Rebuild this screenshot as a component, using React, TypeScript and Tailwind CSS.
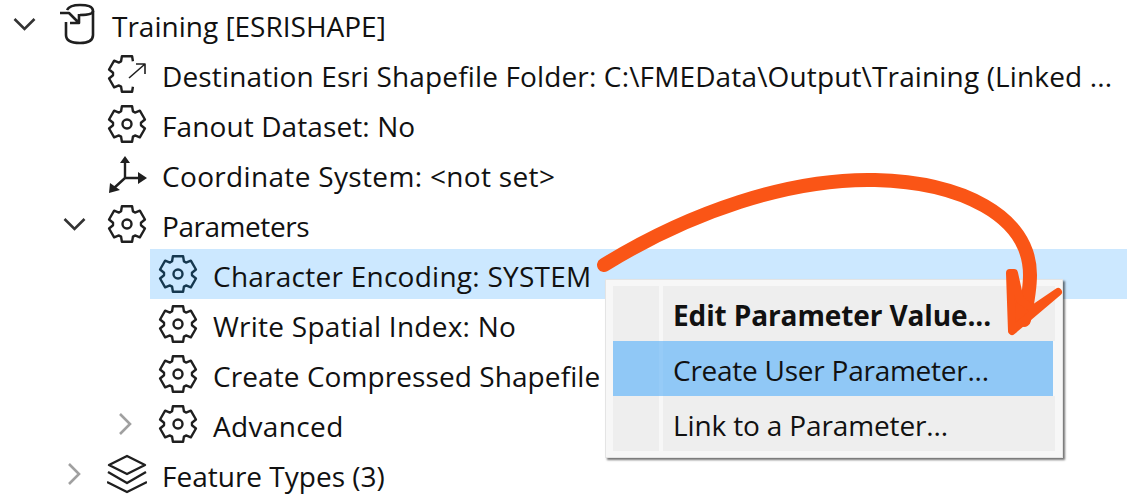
const tooth = (a: number, first: boolean) => {
  const p = (deg: number, r: number) => {
    const t = (deg * Math.PI) / 180;
    return `${(20 + r * Math.cos(t)).toFixed(2)} ${(20 + r * Math.sin(t)).toFixed(2)}`;
  };
  return `${first ? "M" : "A14 14 0 0 1 "}${p(a - 25, 14)}L${p(a - 16, 18.5)}L${p(a + 16, 18.5)}L${p(a + 25, 14)}`;
};

const gearPath = [-90, -30, 30, 90, 150, 210].map((a, i) => tooth(a, i === 0)).join("") + "Z";
const openGearPath = [90, 150, 210, 270].map((a, i) => tooth(a, i === 0)).join("");

function Gear({ color = "#1f1f1f" }: { color?: string }) {
  return (
    <svg width="40" height="40" viewBox="0 0 40 40" fill="none" stroke={color} strokeWidth="2.4" strokeLinejoin="round">
      <path d={gearPath} />
      <circle cx="20" cy="20" r="4.5" />
    </svg>
  );
}

function LinkedGear() {
  return (
    <svg width="40" height="40" viewBox="0 0 40 40" fill="none" stroke="#1f1f1f" strokeWidth="2.4" strokeLinejoin="round">
      <path d={openGearPath} />
      <path d="M22 24 L38 10 M29 10 H38 V20" strokeWidth="1.6" />
    </svg>
  );
}

function Axes() {
  return (
    <svg width="40" height="40" viewBox="0 0 40 40" fill="#1f1f1f" stroke="#1f1f1f" strokeWidth="2.4">
      <path d="M18 8 V24 H32 M18 24 L6 35" fill="none" />
      <path d="M18 2 L23 9 H13 Z M40 24 L31 18 V30 Z M2 39 L3 29 L13 36 Z" stroke="none" />
    </svg>
  );
}

function DatasetIcon() {
  return (
    <svg width="40" height="44" viewBox="0 0 40 44" fill="none" stroke="#1f1f1f" strokeWidth="2.6" strokeLinejoin="round">
      <path d="M9 20 V33 C9 39 15 41 23 41 C31 41 36 39 36 33 V9 C36 4 30 3 23 3 C17 3 12 4 10 8" />
      <path d="M36 9 C36 12 30 13 23 13" />
      <path d="M3 11 H12 L21 20 M13 21 H22 V12" />
    </svg>
  );
}

function Layers() {
  return (
    <svg width="40" height="40" viewBox="0 0 40 40" fill="none" stroke="#1f1f1f" strokeWidth="2.4" strokeLinejoin="round">
      <path d="M20 2 L38 11 L20 20 L2 11 Z" />
      <path d="M1 18 L20 29 L39 18" />
      <path d="M0 28 L20 38 L40 28" />
    </svg>
  );
}

function Chevron({ open, muted }: { open?: boolean; muted?: boolean }) {
  return (
    <svg width="24" height="24" viewBox="0 0 24 24" fill="none" stroke={muted ? "#a0a0a0" : "#333333"} strokeWidth="2.6" strokeLinejoin="miter">
      {open ? <path d="M1.5 7 L11.5 17 L21.5 7" /> : <path d="M6 2 L16 12 L6 22" />}
    </svg>
  );
}

function Row({
  indent,
  chevron,
  icon,
  label,
  tracking = "",
}: {
  indent: string;
  chevron?: React.ReactNode;
  icon: React.ReactNode;
  label: string;
  tracking?: string;
}) {
  return (
    <div className={`flex h-[50px] items-center ${indent}`}>
      {chevron && <span className="mr-5 flex w-6 shrink-0 justify-center">{chevron}</span>}
      <span className="mr-[15px] flex w-10 shrink-0 justify-center">{icon}</span>
      <span className={`min-w-0 whitespace-nowrap pt-1 ${tracking}`}>{label}</span>
    </div>
  );
}

export default function App() {
  return (
    <div
      className="relative h-[495px] w-[1129px] overflow-hidden bg-white text-[28px] text-[#111111]"
      style={{ fontFamily: '"Open Sans", sans-serif' }}
    >
      <div className="-mt-px">
        <Row indent="pl-[13px]" chevron={<Chevron open />} icon={<DatasetIcon />} label="Training [ESRISHAPE]" />
        <Row indent="pl-[107px]" tracking="tracking-[0.14px]" icon={<LinkedGear />} label="Destination Esri Shapefile Folder: C:\FMEData\Output\Training (Linked ..." />
        <Row indent="pl-[107px]" tracking="tracking-[0.1px]" icon={<Gear />} label="Fanout Dataset: No" />
        <Row indent="pl-[107px]" tracking="tracking-[0.33px]" icon={<Axes />} label="Coordinate System: <not set>" />
        <Row indent="pl-[63px]" tracking="tracking-[-0.45px]" chevron={<Chevron open />} icon={<Gear />} label="Parameters" />
        <div className="ml-[150px] mr-[2px] bg-[#cce8ff]">
          <Row indent="pl-[8px]" tracking="tracking-[0.25px]" icon={<Gear color="#16384f" />} label="Character Encoding: SYSTEM" />
        </div>
        <Row indent="pl-[158px]" tracking="tracking-[0.25px]" icon={<Gear />} label="Write Spatial Index: No" />
        <Row indent="pl-[158px]" tracking="tracking-[0.08px]" icon={<Gear />} label="Create Compressed Shapefile" />
        <Row indent="pl-[114px]" tracking="tracking-[0.35px]" chevron={<Chevron muted />} icon={<Gear />} label="Advanced" />
        <Row indent="pl-[63px]" chevron={<Chevron muted />} icon={<Layers />} label="Feature Types (3)" />
      </div>

      {/* Context menu */}
      <div className="absolute left-[605px] top-[279px] w-[458px] border border-[#e4e4e4] bg-[#f7f7f7] pb-[6px] pl-[7px] pr-[7px] pt-[6px] shadow-[2px_2px_2px_rgba(0,0,0,0.55)]">
        <div className="flex h-[55px] items-center bg-[#eeeeee] font-bold tracking-[-0.12px]">
          <span className="h-full w-[50px] shrink-0 border-r-4 border-[#f7f7f7]" />
          <span className="pl-[10px] pt-[2px]">Edit Parameter Value...</span>
        </div>
        <div className="mr-[2px] flex h-[55px] items-center bg-[#90c8f6] tracking-[-0.25px]">
          <span className="h-full w-[50px] shrink-0 border-r-4 border-[#96cbf7]" />
          <span className="pl-[10px] pt-[2px]">Create User Parameter...</span>
        </div>
        <div className="flex h-[55px] items-center bg-[#eeeeee] tracking-[-0.14px]">
          <span className="h-full w-[50px] shrink-0 border-r-4 border-[#f7f7f7]" />
          <span className="pl-[10px] pt-[2px]">Link to a Parameter...</span>
        </div>
      </div>

      {/* Annotation arrow */}
      <svg className="absolute left-0 top-0" width="1129" height="495" viewBox="0 0 1129 495" fill="none">
        <path
          d="M604 265 C690 212 790 178 875 180 C960 182 1030 215 1030 275 C1030 285 1028 300 1024 320"
          stroke="#fa5516"
          strokeWidth="14"
          strokeLinecap="round"
        />
        <path
          d="M1010 273 L1014 273 L1020 300 L1033 309 L1058 292 L1012 331 Z"
          fill="#fa5516"
          stroke="#fa5516"
          strokeWidth="8"
          strokeLinejoin="round"
        />
      </svg>
    </div>
  );
}
